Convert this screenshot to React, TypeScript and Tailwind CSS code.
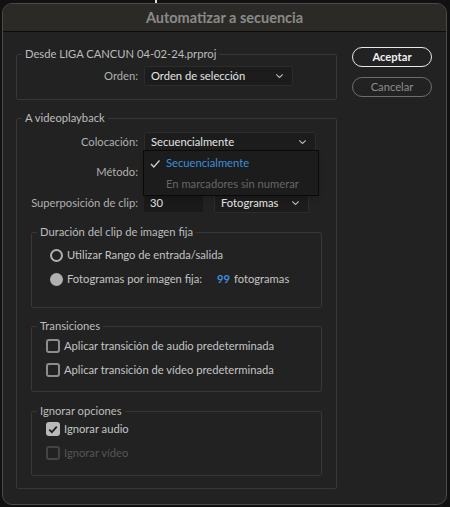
import React from 'react';

const font = { fontFamily: 'Lato, "Noto Sans", sans-serif' };

function Chevron({ className = '' }: { className?: string }) {
  return (
    <svg width="9" height="6" viewBox="0 0 9 6" className={className}>
      <path d="M1.2 1.3 L4.5 4.5 L7.8 1.3" fill="none" stroke="#b8b8b8" strokeWidth="1.1" />
    </svg>
  );
}

function Select({ value, className = '' }: { value: string; className?: string }) {
  return (
    <div className={`flex h-[20px] items-center justify-between rounded-[2px] border border-[#2c2c2c] bg-[#1c1c1c] pl-[6px] pr-[8px] text-[11.2px] text-[#e4e4e4] ${className}`}>
      <span>{value}</span>
      <Chevron />
    </div>
  );
}

function Group({ title, className = '', inner = '', children }: { title: string; className?: string; inner?: string; children: React.ReactNode }) {
  return (
    <fieldset className={`rounded-[2px] border border-[#373737] ${className}`}>
      <legend className="ml-[5px] px-[3px] text-[11.2px] leading-[16px] text-[#bdbdbd]">{title}</legend>
      <div className={inner}>{children}</div>
    </fieldset>
  );
}

function Checkbox({ label, checked = false, disabled = false }: { label: string; checked?: boolean; disabled?: boolean }) {
  return (
    <div className="flex h-[16px] items-center gap-[4px]">
      {checked ? (
        <div className="flex h-[14px] w-[14px] items-center justify-center rounded-[3px] bg-[#b9b9b9]">
          <svg width="10" height="9" viewBox="0 0 10 9">
            <path d="M1.3 4.6 L3.9 7.2 L8.8 1.6" fill="none" stroke="#1f1f1f" strokeWidth="1.8" />
          </svg>
        </div>
      ) : (
        <div className={`h-[14px] w-[14px] rounded-[3px] border-2 ${disabled ? 'border-[#444]' : 'border-[#8d8d8d]'}`} />
      )}
      <span className={`text-[11.2px] ${disabled ? 'text-[#555]' : 'text-[#c4c4c4]'}`}>{label}</span>
    </div>
  );
}

export default function App() {
  return (
    <div className="relative h-[507px] w-[450px] overflow-hidden bg-[#111111] pt-[3px]" style={font}>
      <div className="absolute left-[155px] top-0 h-[3px] w-[2px] bg-[#ddd]" />
      <div className="ml-[2px] flex h-[502px] w-[445px] flex-col overflow-hidden rounded-[10px] border border-[#4a4a4a] bg-[#222222]">
        <div className="flex h-[28px] shrink-0 items-center justify-center border-b border-[#0c0c0c] bg-[#2b2a27] text-[14.5px] font-bold text-[#8a8a8a]">
          Automatizar a secuencia
        </div>
        <div className="flex pl-[13px] pt-[14px]">
          <div className="w-[321px]">
            <Group title="Desde LIGA CANCUN 04-02-24.prproj" inner="pb-[13px]">
              <div className="mt-[4px] flex items-center">
                <span className="w-[127px] pr-[6px] text-right text-[11.2px] text-[#b0b0b0]">Orden:</span>
                <Select value="Orden de selección" className="w-[149px]" />
              </div>
            </Group>

            <Group title="A videoplayback" className="relative mt-[10px]" inner="px-[14px] pb-[12px]">
              <div className="-ml-[14px] mt-[6px] flex flex-col gap-[10px]">
                <div className="flex h-[20px] items-center">
                  <span className="w-[127px] pr-[6px] text-right text-[11.2px] text-[#b0b0b0]">Colocación:</span>
                  <Select value="Secuencialmente" className="w-[172px]" />
                </div>
                <div className="flex h-[20px] items-center">
                  <span className="w-[127px] pr-[6px] text-right text-[11.2px] text-[#b0b0b0]">Método:</span>
                  <Select value="" className="w-[172px]" />
                </div>
                <div className="mt-[1px] flex h-[20px] items-center">
                  <span className="w-[127px] pr-[6px] text-right text-[11.2px] text-[#b0b0b0]">Superposición de clip:</span>
                  <div className="flex h-[18px] w-[59px] items-center bg-[#1a1a1a] pl-[6px] text-[11.2px] text-[#e4e4e4]">30</div>
                  <Select value="Fotogramas" className="ml-[11px] h-[17px] w-[95px]" />
                </div>
              </div>

              <div className="absolute left-[126px] top-[24px] w-[176px] border border-[#0a0a0a] bg-[#1c1c1c] pt-[2px] text-[11.2px] shadow-md">
                <div className="flex h-[21px] items-center">
                  <svg width="22" height="10" viewBox="0 0 22 10" className="shrink-0">
                    <path d="M7 5 L9.8 8 L15.5 1.5" fill="none" stroke="#cfcfcf" strokeWidth="1.3" />
                  </svg>
                  <span className="text-[#3c8fdc]">Secuencialmente</span>
                </div>
                <div className="flex h-[21px] items-center pl-[22px] text-[#666666]">En marcadores sin numerar</div>
              </div>

              <Group title="Duración del clip de imagen fija" className="mt-[11px]" inner="pb-[20px] pl-[18px]">
                <div className="mt-[7px] flex flex-col gap-[8px]">
                  <div className="flex h-[16px] items-center gap-[4px]">
                    <div className="h-[13px] w-[13px] rounded-full border-2 border-[#b0b0b0]" />
                    <span className="text-[11.2px] text-[#c4c4c4]">Utilizar Rango de entrada/salida</span>
                  </div>
                  <div className="flex h-[16px] items-center gap-[4px]">
                    <div className="h-[13px] w-[13px] rounded-full bg-[#b0b0b0]" />
                    <span className="w-[146px] text-[11.2px] text-[#c4c4c4]">Fotogramas por imagen fija:</span>
                    <span className="text-[11.2px] font-bold text-[#3c8fdc]">99</span>
                    <span className="text-[11.2px] text-[#c4c4c4]">fotogramas</span>
                  </div>
                </div>
              </Group>

              <Group title="Transiciones" className="mt-[10px]" inner="pb-[13px] pl-[14px]">
                <div className="mt-[4px] flex flex-col gap-[8px]">
                  <Checkbox label="Aplicar transición de audio predeterminada" />
                  <Checkbox label="Aplicar transición de vídeo predeterminada" />
                </div>
              </Group>

              <Group title="Ignorar opciones" className="mt-[11px]" inner="pb-[14px] pl-[14px]">
                <div className="mt-[2px] flex flex-col gap-[8px]">
                  <Checkbox label="Ignorar audio" checked />
                  <Checkbox label="Ignorar vídeo" disabled />
                </div>
              </Group>
            </Group>
          </div>

          <div className="ml-[15px] flex w-[80px] flex-col gap-[10px] pt-[1px]">
            <button className="h-[20px] rounded-[10px] border-[1.5px] border-[#e8e8e8] text-[11.2px] font-bold text-[#f0f0f0]">Aceptar</button>
            <button className="h-[20px] rounded-[10px] border-[1.5px] border-[#6e6e6e] text-[11.2px] text-[#8e8e8e]">Cancelar</button>
          </div>
        </div>
      </div>
    </div>
  );
}
